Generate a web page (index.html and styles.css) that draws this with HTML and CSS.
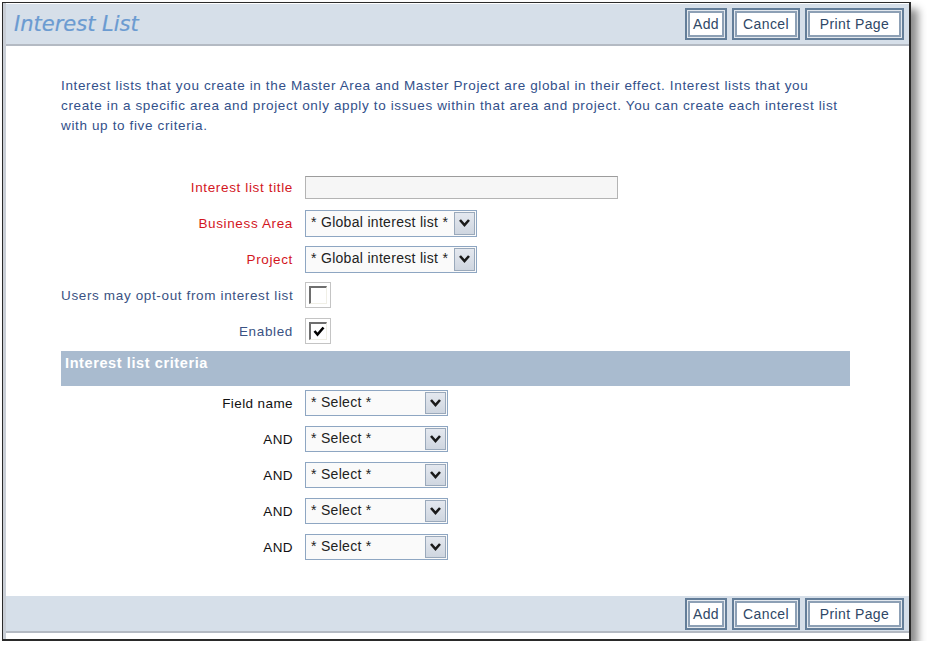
FILE: index.html
```html
<!DOCTYPE html>
<html>
<head>
<meta charset="utf-8">
<link rel="stylesheet" href="styles.css">
</head>
<body>
<div class="window">
  <div class="bar top">
    <div class="title">Interest List</div>
    <div class="buttons">
      <span class="btn b-add">Add</span>
      <span class="btn b-cancel">Cancel</span>
      <span class="btn b-print">Print Page</span>
    </div>
  </div>
  <div class="content">
    <p class="intro">Interest lists that you create in the Master Area and Master Project are global in their effect. Interest lists that you<br>create in a specific area and project only apply to issues within that area and project. You can create each interest list<br>with up to five criteria.</p>
    <div class="form">
      <label class="lbl req">Interest list title</label>
      <div class="ctl"><span class="textbox"></span></div>
      <label class="lbl req">Business Area</label>
      <div class="ctl"><span class="select wide"><span class="val">* Global interest list *</span><span class="arrow"><svg width="13" height="10" viewBox="0 0 13 10"><path d="M2 2 L6.5 7 L11 2" fill="none" stroke="#1a1a1a" stroke-width="2.6"/></svg></span></span></div>
      <label class="lbl req">Project</label>
      <div class="ctl"><span class="select wide"><span class="val">* Global interest list *</span><span class="arrow"><svg width="13" height="10" viewBox="0 0 13 10"><path d="M2 2 L6.5 7 L11 2" fill="none" stroke="#1a1a1a" stroke-width="2.6"/></svg></span></span></div>
      <label class="lbl">Users may opt-out from interest list</label>
      <div class="ctl"><span class="chk"><span class="box"></span></span></div>
      <label class="lbl">Enabled</label>
      <div class="ctl"><span class="chk"><span class="box"><svg width="12" height="11" viewBox="0 0 12 11"><path d="M1.5 5 L4.5 8.5 L10.5 1.5" fill="none" stroke="#000" stroke-width="2.6"/></svg></span></span></div>
    </div>
    <div class="section">Interest list criteria</div>
    <div class="form crit">
      <label class="lbl dark">Field name</label>
      <div class="ctl"><span class="select narrow"><span class="val">* Select *</span><span class="arrow"><svg width="13" height="10" viewBox="0 0 13 10"><path d="M2 2 L6.5 7 L11 2" fill="none" stroke="#1a1a1a" stroke-width="2.6"/></svg></span></span></div>
      <label class="lbl dark">AND</label>
      <div class="ctl"><span class="select narrow"><span class="val">* Select *</span><span class="arrow"><svg width="13" height="10" viewBox="0 0 13 10"><path d="M2 2 L6.5 7 L11 2" fill="none" stroke="#1a1a1a" stroke-width="2.6"/></svg></span></span></div>
      <label class="lbl dark">AND</label>
      <div class="ctl"><span class="select narrow"><span class="val">* Select *</span><span class="arrow"><svg width="13" height="10" viewBox="0 0 13 10"><path d="M2 2 L6.5 7 L11 2" fill="none" stroke="#1a1a1a" stroke-width="2.6"/></svg></span></span></div>
      <label class="lbl dark">AND</label>
      <div class="ctl"><span class="select narrow"><span class="val">* Select *</span><span class="arrow"><svg width="13" height="10" viewBox="0 0 13 10"><path d="M2 2 L6.5 7 L11 2" fill="none" stroke="#1a1a1a" stroke-width="2.6"/></svg></span></span></div>
      <label class="lbl dark">AND</label>
      <div class="ctl"><span class="select narrow"><span class="val">* Select *</span><span class="arrow"><svg width="13" height="10" viewBox="0 0 13 10"><path d="M2 2 L6.5 7 L11 2" fill="none" stroke="#1a1a1a" stroke-width="2.6"/></svg></span></span></div>
    </div>
  </div>
  <div class="bar bottom">
    <div class="buttons">
      <span class="btn b-add">Add</span>
      <span class="btn b-cancel">Cancel</span>
      <span class="btn b-print">Print Page</span>
    </div>
  </div>
</div>
</body>
</html>
```

FILE: styles.css
```css
html, body {
  margin: 0;
  padding: 0;
  background: #fff;
}
body {
  font-family: "Liberation Sans", Arial, sans-serif;
  font-size: 13px;
}
.window {
  margin: 2px 0 0 2px;
  width: 903px;
  height: 636px;
  border: 2px solid #2a2a2a;
  border-left-width: 1px;
  border-top-width: 1px;
  box-shadow: 7px 7px 8px rgba(0, 0, 0, 0.45);
  display: flex;
  flex-direction: column;
  background: #fff;
  padding-left: 3px;
  box-sizing: content-box;
  position: relative;
}
.window::before {
  content: "";
  position: absolute;
  left: 0;
  top: 0;
  bottom: 0;
  width: 3px;
  background: #c9ced6;
}
.bar {
  background: #d6dfe9;
  display: flex;
  align-items: center;
  border-bottom: 2px solid #b4bac3;
}
.bar.top {
  height: 40px;
  margin-top: 1px;
}
.bar.bottom {
  height: 35px;
  margin-bottom: 6px;
  justify-content: flex-end;
}
.title {
  flex: 1;
  padding-left: 8px;
  font-family: "DejaVu Sans", Verdana, sans-serif;
  font-style: italic;
  font-size: 21px;
  color: #6b9bd1;
  letter-spacing: 0;
  -webkit-text-stroke: 0.2px #6b9bd1;
}
.buttons {
  display: flex;
  gap: 5px;
  padding-right: 5px;
}
.btn {
  box-sizing: border-box;
  height: 32px;
  border: 2px solid #647e99;
  background: #fff;
  box-shadow: inset 0 0 0 1px #e3e8ee, inset 0 0 0 3px #8da0b5;
  display: flex;
  align-items: center;
  justify-content: center;
  font-size: 14px;
  letter-spacing: 0.4px;
  color: #2f4766;
}
.b-add { width: 42px; }
.b-cancel { width: 68px; }
.b-print { width: 99px; }
.content {
  flex: 1;
  padding-left: 55px;
}
.intro {
  margin: 30px 0 33px 0;
  line-height: 20px;
  font-size: 13.5px;
  letter-spacing: 0.64px;
  color: #32508a;
  white-space: nowrap;
}
.form {
  display: grid;
  grid-template-columns: 232px auto;
  column-gap: 12px;
  grid-auto-rows: 36px;
  align-items: center;
}
.lbl {
  text-align: right;
  font-size: 13.5px;
  letter-spacing: 0.64px;
  color: #3a5283;
  white-space: nowrap;
}
.lbl.req { color: #d3161e; }
.lbl.dark { color: #111; letter-spacing: 0.4px; }
.ctl {
  display: flex;
  align-items: center;
}
.textbox {
  display: block;
  box-sizing: border-box;
  width: 313px;
  height: 23px;
  border: 1px solid #b4b4b4;
  border-top-color: #9c9c9c;
  background: #f6f6f6;
}
.select {
  box-sizing: border-box;
  height: 27px;
  border: 1px solid #8ea6c2;
  background: #fafafa;
  display: flex;
  align-items: center;
  padding: 1px;
}
.select.wide { width: 172px; }
.select.narrow { width: 143px; height: 26px; }
.val {
  flex: 1;
  padding-left: 4px;
  font-size: 14px;
  letter-spacing: 0.3px;
  color: #222;
  white-space: nowrap;
  position: relative;
  top: -1px;
}
.arrow {
  box-sizing: border-box;
  width: 21px;
  height: 100%;
  border: 1px solid #9aa9bb;
  background: linear-gradient(#e4e8ef, #cfd6e0);
  display: flex;
  align-items: center;
  justify-content: center;
}
.chk {
  box-sizing: border-box;
  width: 26px;
  height: 26px;
  border: 1px solid #c4c4c4;
  background: #fff;
  padding: 3px;
  display: block;
}
.box {
  box-sizing: border-box;
  display: flex;
  align-items: center;
  justify-content: center;
  width: 18px;
  height: 18px;
  border-top: 2px solid #6e6e6e;
  border-left: 2px solid #6e6e6e;
  border-right: 1px solid #f0efe6;
  border-bottom: 1px solid #f0efe6;
  background: #fff;
}
.section {
  margin-top: 2px;
  width: 789px;
  height: 35px;
  box-sizing: border-box;
  background: #a9bbcf;
  color: #fff;
  font-weight: bold;
  font-size: 14.5px;
  letter-spacing: 0.6px;
  padding: 4px 0 0 4px;
}
.crit {
  margin-top: -1px;
}
```
